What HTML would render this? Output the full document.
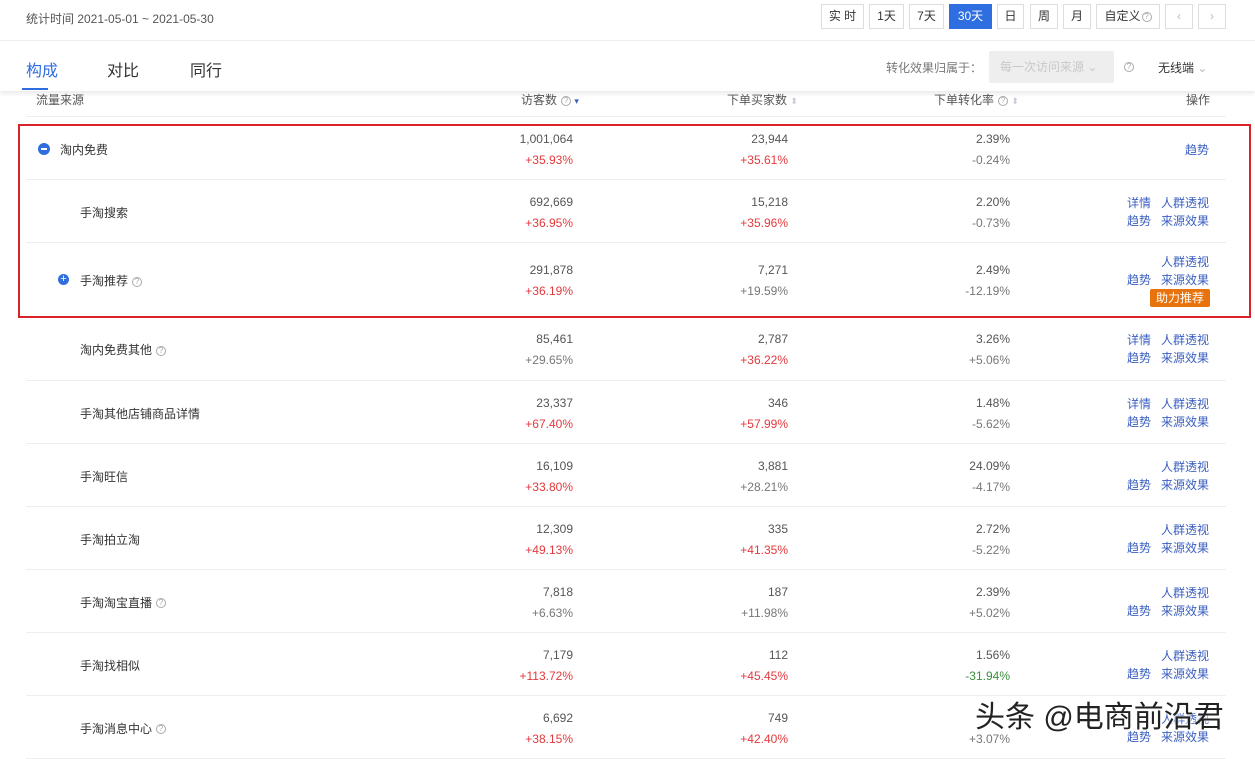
<!DOCTYPE html>
<html><head><meta charset="utf-8"><style>
*{margin:0;padding:0;box-sizing:border-box}
body{width:1255px;height:748px;overflow:hidden;background:#fff;font-family:"Liberation Sans","Noto Sans CJK SC",sans-serif;font-size:12px;color:#444;position:relative}
.a{position:absolute;white-space:nowrap}
.btn{position:absolute;top:4px;height:25px;border:1px solid #ddd;line-height:23px;text-align:center;font-size:12px;color:#333;background:#fff}
.n{position:absolute;text-align:right;font-size:12px;line-height:21px;color:#555}
.red{color:#e4393c}.gr{color:#777}.grn{color:#3c8f3c}
.lk{color:#3b5fc0;position:absolute;font-size:12px}
.q{display:inline-block;width:10px;height:10px;border:1px solid #aaa;border-radius:50%;font-size:8px;line-height:8px;text-align:center;color:#aaa;vertical-align:middle;margin-left:4px}
</style></head><body>
<div class="a" style="left:26px;top:10px;color:#555">统计时间 2021-05-01 ~ 2021-05-30</div>
<div class="btn" style="left:821px;width:43px">实 时</div>
<div class="btn" style="left:869px;width:35px">1天</div>
<div class="btn" style="left:909px;width:35px">7天</div>
<div class="btn" style="left:949px;width:43px;background:#2f6ee0;color:#fff;border-color:#2f6ee0">30天</div>
<div class="btn" style="left:997px;width:27px">日</div>
<div class="btn" style="left:1030px;width:28px">周</div>
<div class="btn" style="left:1063px;width:28px">月</div>
<div class="btn" style="left:1096px;width:64px">自定义<span class="q" style="margin-left:1px">?</span></div>
<div class="btn" style="left:1165px;width:28px;color:#bbb">‹</div>
<div class="btn" style="left:1198px;width:28px;color:#bbb">›</div>
<div class="a" style="left:0;top:40px;width:1255px;height:1px;background:#eee"></div>
<div class="a" style="left:0;top:41px;width:1255px;height:50px;box-shadow:0 3px 4px rgba(0,0,0,.08);background:#fff"></div>
<div class="a" style="left:26px;top:57px;font-size:16px;color:#2f6ee0">构成</div>
<div class="a" style="left:22px;top:88px;width:26px;height:2px;background:#2f6ee0"></div>
<div class="a" style="left:107px;top:57px;font-size:16px;color:#333">对比</div>
<div class="a" style="left:190px;top:57px;font-size:16px;color:#333">同行</div>
<div class="a" style="left:886px;top:59px;color:#777">转化效果归属于：</div>
<div class="a" style="left:989px;top:51px;width:125px;height:32px;background:#eee;border-radius:2px;color:#c8c8c8;line-height:32px;padding-left:11px">每一次访问来源 ⌄</div>
<div class="a" style="left:1120px;top:59px"><span class="q">?</span></div>
<div class="a" style="left:1158px;top:59px;color:#333">无线端 <span style="color:#bbb">⌄</span></div>
<div class="a" style="left:36px;top:91px;color:#555">流量来源</div>
<div class="a" style="left:521px;top:91px;color:#555">访客数<span class="q">?</span> <span style="color:#3b5fc0;font-size:9px">▾</span></div>
<div class="a" style="left:727px;top:91px;color:#555">下单买家数 <span style="color:#ccd;font-size:9px">⬍</span></div>
<div class="a" style="left:934px;top:91px;color:#555">下单转化率<span class="q">?</span> <span style="color:#ccd;font-size:9px">⬍</span></div>
<div class="a" style="left:1186px;top:91px;color:#555">操作</div>
<div class="a" style="left:26px;top:116px;width:1200px;height:1px;background:#eee"></div>
<div id="rows"></div>
<div class="a" style="left:18px;top:124px;width:1233px;height:194px;border:2px solid #d9232b"></div>
<div class="a" style="left:975px;top:692px;font-size:30px;color:#222;text-shadow:0 0 2px #fff,0 0 3px #fff">头条 @电商前沿君</div>
<script>
var R=[["淘内免费",0,"1,001,064","+35.93%","r","23,944","+35.61%","r","2.39%","-0.24%","g",117,63,"t"],
["手淘搜索",0,"692,669","+36.95%","r","15,218","+35.96%","r","2.20%","-0.73%","g",180,63,"a"],
["手淘推荐",1,"291,878","+36.19%","r","7,271","+19.59%","g","2.49%","-12.19%","g",243,74,"p"],
["淘内免费其他",1,"85,461","+29.65%","g","2,787","+36.22%","r","3.26%","+5.06%","g",317,64,"a"],
["手淘其他店铺商品详情",0,"23,337","+67.40%","r","346","+57.99%","r","1.48%","-5.62%","g",381,63,"a"],
["手淘旺信",0,"16,109","+33.80%","r","3,881","+28.21%","g","24.09%","-4.17%","g",444,63,"b"],
["手淘拍立淘",0,"12,309","+49.13%","r","335","+41.35%","r","2.72%","-5.22%","g",507,63,"b"],
["手淘淘宝直播",1,"7,818","+6.63%","g","187","+11.98%","g","2.39%","+5.02%","g",570,63,"b"],
["手淘找相似",0,"7,179","+113.72%","r","112","+45.45%","r","1.56%","-31.94%","n",633,63,"b"],
["手淘消息中心",1,"6,692","+38.15%","r","749","+42.40%","r","","+3.07%","g",696,63,"b"]];
var h="";
R.forEach(function(r,i){var t=r[11],H=r[12],c=t+H/2;var C=function(k){return k=="r"?"red":k=="n"?"grn":"gr"};
h+='<div class="a" style="left:26px;top:'+(t+H-1)+'px;width:1200px;height:1px;background:#eee"></div>';
var x=i==0?60:80;
if(i==0)h+='<div class="a" style="left:38px;top:'+(c-6)+'px;width:12px;height:12px;border-radius:50%;background:#2f6ee0"><div style="position:absolute;left:3px;top:5px;width:6px;height:2px;background:#fff"></div></div>';
if(i==2)h+='<div class="a" style="left:58px;top:'+(c-6)+'px;width:11px;height:11px;border-radius:50%;background:#2f6ee0;color:#fff;font-size:11px;line-height:10px;text-align:center">+</div>';
h+='<div class="a" style="left:'+x+'px;top:'+(c-8)+'px;color:#333">'+r[0]+(r[1]?'<span class="q">?</span>':'')+'</div>';
var y=c-20;
[[573,2],[788,5],[1010,8]].forEach(function(p){h+='<div class="n" style="left:'+(p[0]-150)+'px;width:150px;top:'+y+'px">'+r[p[1]]+'<br><span class="'+C(r[p[1]+2])+'">'+r[p[1]+1]+'</span></div>'});
var L=function(xx,yy,s){h+='<div class="lk" style="left:'+xx+'px;top:'+yy+'px">'+s+'</div>'};
if(r[13]=="t")L(1185,c-8,"趋势");
else if(r[13]=="a"){L(1127,c-18,"详情");L(1161,c-18,"人群透视");L(1127,c,"趋势");L(1161,c,"来源效果")}
else if(r[13]=="b"){L(1161,c-18,"人群透视");L(1127,c,"趋势");L(1161,c,"来源效果")}
else{L(1161,c-27,"人群透视");L(1127,c-9,"趋势");L(1161,c-9,"来源效果");h+='<div class="a" style="left:1150px;top:'+(c+9)+'px;width:60px;height:18px;background:#e8720c;color:#fff;border-radius:2px;text-align:center;line-height:18px">助力推荐</div>'}
});
document.getElementById("rows").innerHTML=h;
</script>
</body></html>
